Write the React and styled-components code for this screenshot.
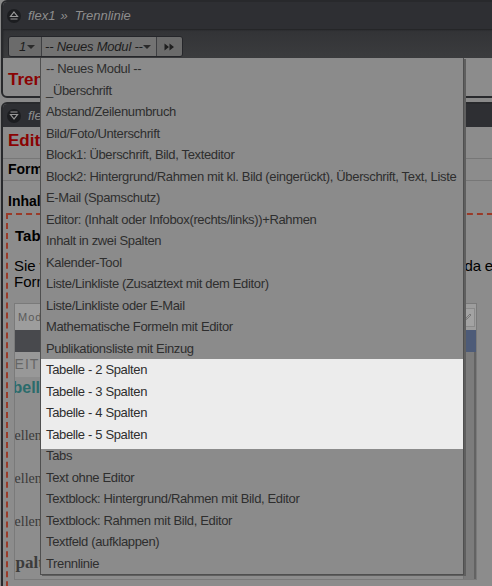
import React from 'react'
import styled, { createGlobalStyle } from 'styled-components'

const GlobalStyle = createGlobalStyle`
    html, body {
        margin: 0;
        padding: 0;
    }

    body {
        background: #8a8a8a;
        font-family: "Liberation Sans", Arial, sans-serif;
        overflow: hidden;
    }
`

const Page = styled.div`
    position: relative;
    width: 492px;
    height: 586px;
    padding-left: 1px;
    box-sizing: border-box;
    overflow: hidden;
`

const Panel = styled.section`
    width: 520px;
    margin-bottom: 4px;
    border: 2px solid #28292c;
    border-radius: 6px;
    background: #8c8c8c;
    overflow: hidden;
`

const PanelHeader = styled.div`
    display: flex;
    align-items: center;
    gap: 7px;
    height: ${(p) => p.$height}px;
    padding-left: 4px;
    background: #2e2f33;
    color: #8d8d8d;
    font-size: 13px;
    font-style: italic;
`

const ToggleIcon = styled.span`
    display: flex;
    align-items: center;
    justify-content: center;
    width: 14px;
    height: 14px;
    border-radius: 50%;
    background: #1c1d20;
`

const Crumb = styled.span`
    margin: 0 7px 0 5px;
`

const Toolbar = styled.div`
    height: 29px;
    box-sizing: border-box;
    padding: 7px 0 0 5px;
    background: linear-gradient(#323336, #3b3c3e);
    box-shadow: inset 0 1px 2px rgba(0, 0, 0, 0.35);
`

const ButtonGroup = styled.div`
    display: inline-flex;
    height: 21px;
    border: 1px solid #25262a;
    border-radius: 3px;
    overflow: hidden;
    box-sizing: border-box;
`

const Segment = styled.div`
    display: flex;
    align-items: center;
    justify-content: space-between;
    width: ${(p) => p.$width}px;
    box-sizing: border-box;
    padding: 0 ${(p) => p.$padRight || 6}px 0 ${(p) => p.$padLeft || 6}px;
    background: ${(p) => p.$bg || '#6b6b6b'};
    border-left: ${(p) => (p.$first ? 'none' : '1px solid #3e3f42')};
    color: #1d1d1d;
    font-size: 13px;
    font-style: italic;
    letter-spacing: -0.2px;
`

const Caret = styled.span`
    width: 0;
    height: 0;
    border-left: 4px solid transparent;
    border-right: 4px solid transparent;
    border-top: 4px solid #2a2a2a;
`

const PanelBody = styled.div`
    height: ${(p) => p.$height}px;
    box-sizing: border-box;
    padding: ${(p) => p.$top || 0}px 0 0 5px;
    line-height: 20px;
    border-bottom: ${(p) => (p.$line ? '1px solid #777' : 'none')};
`

const RedTitle = styled.div`
    color: #8a0303;
    font-size: 17px;
    font-weight: bold;
`

const FieldLabel = styled.div`
    color: #000;
    font-size: 14px;
    font-weight: bold;
    line-height: ${(p) => p.$lh || 16}px;
`

const DashedBox = styled.div`
    margin-left: 3px;
    padding: 12px 0 0 6px;
    height: 400px;
    border: 2px dashed #9a3a28;
    border-right: none;
    border-bottom: none;
`

const BoxTitle = styled.div`
    padding-left: 1px;
    color: #000;
    font-size: 15px;
    font-weight: bold;
    line-height: 18px;
`

const Text = styled.p`
    margin: 13px 0 0;
    width: 520px;
    color: #000;
    font-size: 15px;
    line-height: 16px;
    word-spacing: -0.4px;
    white-space: nowrap;
`

const TableScroll = styled.div`
    display: flex;
    flex-direction: column;
    width: 463px;
    height: 277px;
    margin-top: 13px;
    box-sizing: border-box;
    border: 1px solid #7a7a7a;
    background: #8d8d8d;
    overflow: hidden;
`

const TableHead = styled.div`
    display: flex;
    justify-content: space-between;
    align-items: center;
    height: 26px;
    flex-shrink: 0;
    padding-left: 3px;
    background: #9d9d9d;
    color: #5a5a5a;
    font-size: 11px;
    letter-spacing: 1px;
`

const EditCell = styled.span`
    display: flex;
    align-items: center;
    justify-content: center;
    width: 12px;
    height: 17px;
    margin-right: 1px;
    border: 1px solid #8a8a8a;
    background: #a3a3a3;
`

const DarkBar = styled.div`
    display: flex;
    justify-content: flex-end;
    height: 22px;
    flex-shrink: 0;
    background: #48494d;
`

const BlueCell = styled.span`
    width: 11px;
    background: #4d5b78;
`

const ScrollArea = styled.div`
    display: flex;
    flex: 1;
    min-height: 0;
`

const Rows = styled.div`
    flex: 1;
    overflow: hidden;
`

const VScroll = styled.div`
    width: 10px;
    background: #7c7c7c;
    border-left: 1px solid #757575;
    border-right: 2px solid #636363;
`

const Band = styled.div`
    height: 25px;
    line-height: 25px;
    background: #989898;
    color: #666;
    font-size: 14px;
    letter-spacing: 1px;
`

const Cell = styled.div`
    height: ${(p) => p.$height}px;
    line-height: ${(p) => p.$height}px;
    margin-top: ${(p) => p.$gap || 0}px;
    white-space: nowrap;
    color: ${(p) => p.$color || '#3a3a3a'};
    font-family: ${(p) => (p.$serif ? '"Liberation Serif", serif' : '"Liberation Sans", sans-serif')};
    font-size: ${(p) => p.$size}px;
    font-weight: ${(p) => (p.$bold ? 'bold' : 'normal')};
`

const Clip = styled.span`
    display: inline-block;
    margin-left: ${(p) => -p.$shift}px;
`

const Menu = styled.ul`
    position: absolute;
    left: 40px;
    top: 58px;
    width: 424px;
    margin: 0;
    padding: 0;
    list-style: none;
    box-sizing: border-box;
    border: 1px solid #4f4f4f;
    border-top: none;
    background: #8b8b8b;
    box-shadow: 2px 1px 0 #5f5f5f;
    z-index: 2;
`

const MenuItem = styled.li`
    position: relative;
    height: 21.5px;
    line-height: 21.5px;
    padding-left: 5px;
    background: ${(p) => (p.$hover ? '#ececec' : 'transparent')};
    box-shadow: ${(p) => (p.$tail ? '0 4px 0 #ececec' : 'none')};
    z-index: ${(p) => (p.$tail ? 1 : 0)};
    color: #2e2e2e;
    font-size: 13px;
    letter-spacing: -0.35px;
    white-space: nowrap;
`

const modules = [
    '-- Neues Modul --',
    '_Überschrift',
    'Abstand/Zeilenumbruch',
    'Bild/Foto/Unterschrift',
    'Block1: Überschrift, Bild, Texteditor',
    'Block2: Hintergrund/Rahmen mit kl. Bild (eingerückt), Überschrift, Text, Liste',
    'E-Mail (Spamschutz)',
    'Editor: (Inhalt oder Infobox(rechts/links))+Rahmen',
    'Inhalt in zwei Spalten',
    'Kalender-Tool',
    'Liste/Linkliste (Zusatztext mit dem Editor)',
    'Liste/Linkliste oder E-Mail',
    'Mathematische Formeln mit Editor',
    'Publikationsliste mit Einzug',
    'Tabelle - 2 Spalten',
    'Tabelle - 3 Spalten',
    'Tabelle - 4 Spalten',
    'Tabelle - 5 Spalten',
    'Tabs',
    'Text ohne Editor',
    'Textblock: Hintergrund/Rahmen mit Bild, Editor',
    'Textblock: Rahmen mit Bild, Editor',
    'Textfeld (aufklappen)',
    'Trennlinie',
]

const Eject = ({ down }) => (
    <svg width="10" height="9" viewBox="0 0 10 9">
        <g fill="none" stroke="#9a9a9a" strokeWidth="1.2" transform={down ? 'rotate(180 5 4.5)' : undefined}>
            <path d="M5 1 L8.5 5.5 L1.5 5.5 Z" />
            <path d="M1.5 8 L8.5 8" />
        </g>
    </svg>
)

const Forward = () => (
    <svg width="11" height="8" viewBox="0 0 11 8">
        <path d="M0.5 0.5 L5 4 L0.5 7.5 Z M5.5 0.5 L10 4 L5.5 7.5 Z" fill="#1f1f1f" />
    </svg>
)

const Pencil = () => (
    <svg width="8" height="8" viewBox="0 0 8 8">
        <path d="M1 7 L2 5 L6 1 L7 2 L3 6 Z" fill="none" stroke="#777" strokeWidth="1" />
    </svg>
)

const App = () => {
    return (
        <Page>
            <GlobalStyle />

            <Panel>
                <PanelHeader $height={27}>
                    <ToggleIcon>
                        <Eject />
                    </ToggleIcon>
                    <span>
                        flex1<Crumb>»</Crumb>Trennlinie
                    </span>
                </PanelHeader>
                <Toolbar>
                    <ButtonGroup>
                        <Segment $first $width={32} $padLeft={10} $padRight={6}>
                            1 <Caret />
                        </Segment>
                        <Segment $width={115} $bg="#737373" $padLeft={3} $padRight={5}>
                            -- Neues Modul -- <Caret />
                        </Segment>
                        <Segment $width={26} $padLeft={7} $padRight={6}>
                            <Forward />
                        </Segment>
                    </ButtonGroup>
                </Toolbar>
                <PanelBody $height={38} $top={12}>
                    <RedTitle>Trennlinie</RedTitle>
                </PanelBody>
            </Panel>

            <Panel>
                <PanelHeader $height={23}>
                    <ToggleIcon>
                        <Eject down />
                    </ToggleIcon>
                    <span>flex1</span>
                </PanelHeader>
                <PanelBody $height={32} $top={4} $line>
                    <RedTitle>Editor</RedTitle>
                </PanelBody>
                <PanelBody $height={22} $line>
                    <FieldLabel $lh={21}>Formular</FieldLabel>
                </PanelBody>
                <PanelBody $height={32} $top={12}>
                    <FieldLabel>Inhalt</FieldLabel>
                </PanelBody>
                <DashedBox>
                    <BoxTitle>Tabelle - 2 Spalten</BoxTitle>
                    <Text>
                        Sie verwenden diese Vorlage, um Inhalte übersichtlich darzustellen, da eine
                        <br />
                        Formatierung möglich ist.
                    </Text>
                    <TableScroll>
                        <TableHead>
                            <span>Modul</span>
                            <EditCell>
                                <Pencil />
                            </EditCell>
                        </TableHead>
                        <DarkBar>
                            <BlueCell />
                        </DarkBar>
                        <ScrollArea>
                            <Rows>
                                <Band>
                                    <Clip $shift={10}>ZEIT</Clip>
                                </Band>
                                <Cell $height={22} $size={16} $bold $color="#2a6b6b">
                                    <Clip $shift={20}>Tabelle</Clip>
                                </Cell>
                                <Cell $height={43} $gap={15} $size={14} $serif>
                                    <Clip $shift={9}>Zellen</Clip>
                                </Cell>
                                <Cell $height={43} $size={14} $serif>
                                    <Clip $shift={9}>Zellen</Clip>
                                </Cell>
                                <Cell $height={43} $size={14} $serif>
                                    <Clip $shift={9}>Zellen</Clip>
                                </Cell>
                                <Cell $height={40} $size={17} $serif $bold $color="#3c3c3c">
                                    <Clip $shift={9}>Spalte</Clip>
                                </Cell>
                            </Rows>
                            <VScroll />
                        </ScrollArea>
                    </TableScroll>
                </DashedBox>
            </Panel>

            <Menu>
                {modules.map((name, i) => (
                    <MenuItem key={name} $hover={i >= 14 && i <= 17} $tail={i === 17}>
                        {name}
                    </MenuItem>
                ))}
            </Menu>
        </Page>
    )
}

export default App
